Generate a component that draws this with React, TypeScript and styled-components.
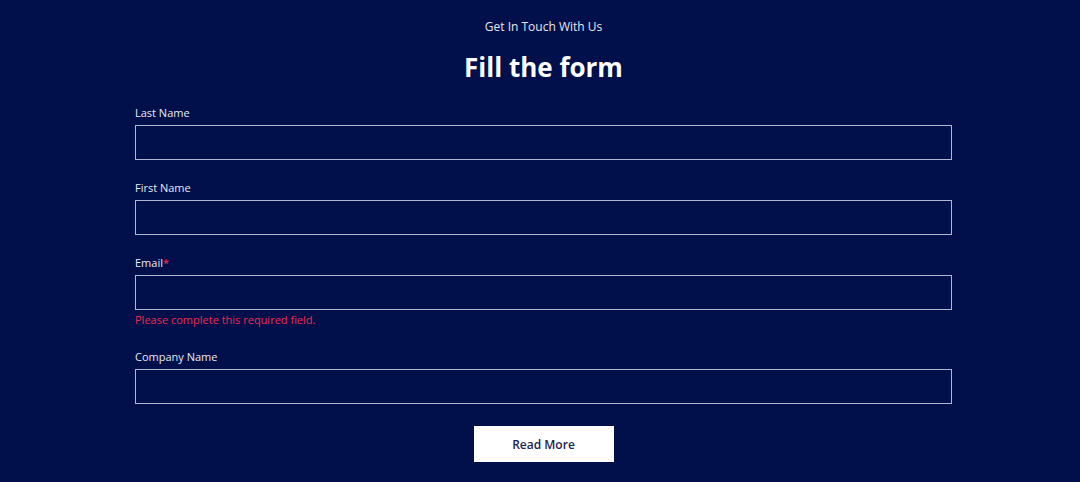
import styled, { createGlobalStyle } from "styled-components";

const GlobalStyle = createGlobalStyle`
  html, body {
    margin: 0;
    padding: 0;
    background: #01104a;
  }
  body {
    font-family: "Open Sans", "Noto Sans", sans-serif;
  }
`;

const Page = styled.section`
  width: 1080px;
  height: 482px;
  background: #01104a;
  color: #ffffff;
  display: flex;
  flex-direction: column;
  align-items: center;
  padding: 19px 0 0 7px;
  box-sizing: border-box;
  overflow: hidden;
`;

const Eyebrow = styled.p`
  margin: 0;
  font-size: 12px;
  line-height: 16px;
  color: #e4e6ee;
  font-weight: 500;
`;

const Title = styled.h1`
  margin: 16px 0 0;
  font-size: 26px;
  line-height: 32px;
  font-weight: 700;
  color: #ffffff;
`;

const Form = styled.form`
  width: 817px;
  margin-top: 23px;
  display: flex;
  flex-direction: column;
`;

const Field = styled.div<{ $gap?: number }>`
  display: flex;
  flex-direction: column;
  margin-bottom: ${(p) => p.$gap ?? 21}px;
`;

const Label = styled.label`
  font-size: 11px;
  line-height: 14px;
  margin-bottom: 5px;
  color: #e8eaf2;
`;

const Required = styled.span`
  color: #f2365a;
`;

const Input = styled.input`
  height: 35px;
  box-sizing: border-box;
  border: 1px solid #b3b7cb;
  background: transparent;
  color: #ffffff;
  outline: none;
  padding: 0 10px;
  font: inherit;
`;

const ErrorText = styled.span`
  margin-top: 3px;
  font-size: 11px;
  line-height: 14px;
  color: #f0284c;
`;

const Button = styled.button`
  align-self: center;
  width: 140px;
  height: 36px;
  margin-top: 1px;
  border: none;
  background: #ffffff;
  color: #1c2450;
  font-family: inherit;
  font-size: 12px;
  font-weight: 600;
  cursor: pointer;
`;

export default function App() {
  return (
    <>
      <GlobalStyle />
      <Page>
        <Eyebrow>Get In Touch With Us</Eyebrow>
        <Title>Fill the form</Title>
        <Form onSubmit={(e) => e.preventDefault()}>
          <Field>
            <Label>Last Name</Label>
            <Input type="text" />
          </Field>
          <Field>
            <Label>First Name</Label>
            <Input type="text" />
          </Field>
          <Field $gap={23}>
            <Label>
              Email<Required>*</Required>
            </Label>
            <Input type="email" />
            <ErrorText>Please complete this required field.</ErrorText>
          </Field>
          <Field>
            <Label>Company Name</Label>
            <Input type="text" />
          </Field>
          <Button type="button">Read More</Button>
        </Form>
      </Page>
    </>
  );
}
